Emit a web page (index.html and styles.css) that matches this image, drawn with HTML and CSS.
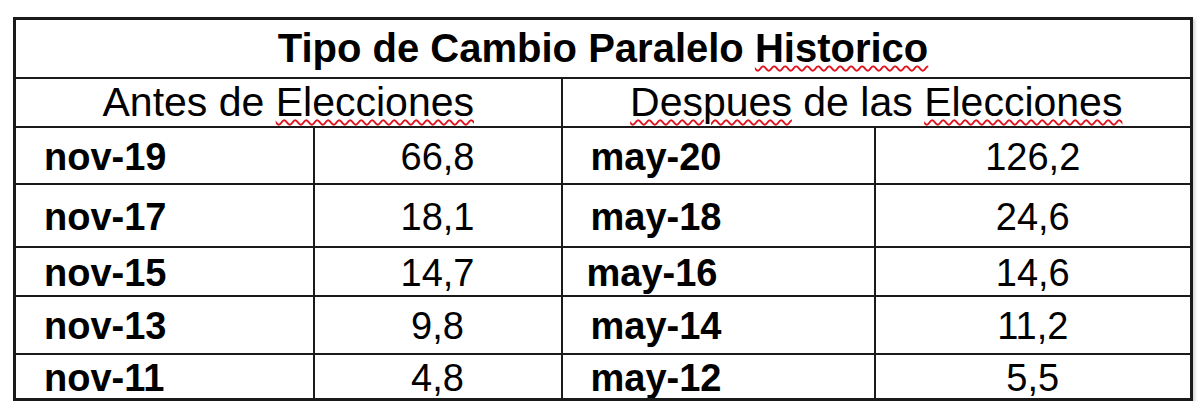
FILE: index.html
```html
<!DOCTYPE html>
<html lang="es">
<head>
<meta charset="utf-8">
<title>Tipo de Cambio Paralelo Historico</title>
<link rel="stylesheet" href="styles.css">
</head>
<body>
<table class="fx">
  <colgroup>
    <col class="c1"><col class="c2"><col class="c3"><col class="c4">
  </colgroup>
  <tr class="r-title">
    <th colspan="4" class="title">Tipo de Cambio Paralelo <span class="spell">Historico</span></th>
  </tr>
  <tr class="r-head">
    <th colspan="2" class="head">Antes de <span class="spell">Elecciones</span></th>
    <th colspan="2" class="head"><span class="spell">Despues</span> de las <span class="spell">Elecciones</span></th>
  </tr>
  <tr class="r1">
    <td class="lbl">nov-19</td><td class="val">66,8</td>
    <td class="lbl">may-20</td><td class="val">126,2</td>
  </tr>
  <tr class="r2">
    <td class="lbl">nov-17</td><td class="val">18,1</td>
    <td class="lbl">may-18</td><td class="val">24,6</td>
  </tr>
  <tr class="r3">
    <td class="lbl">nov-15</td><td class="val">14,7</td>
    <td class="lbl lbl-tight">may-16</td><td class="val">14,6</td>
  </tr>
  <tr class="r4">
    <td class="lbl">nov-13</td><td class="val">9,8</td>
    <td class="lbl">may-14</td><td class="val">11,2</td>
  </tr>
  <tr class="r5">
    <td class="lbl">nov-11</td><td class="val">4,8</td>
    <td class="lbl">may-12</td><td class="val">5,5</td>
  </tr>
</table>
</body>
</html>
```

FILE: styles.css
```css
html, body {
  margin: 0;
  padding: 0;
  background: #ffffff;
}

body {
  padding: 17px 0 0 13px;
  font-family: "Liberation Sans", Arial, sans-serif;
  color: #000;
}

.fx {
  border-collapse: collapse;
  table-layout: fixed;
  width: 1177px;
  border: 3px solid #1a1a1a;
  box-shadow: 2px 2px 3px rgba(0, 0, 0, 0.18);
}

.c1 { width: 299px; }
.c2 { width: 248px; }
.c3 { width: 313px; }
.c4 { width: 317px; }

.fx th,
.fx td {
  border: 2px solid #1a1a1a;
  padding: 0;
  vertical-align: middle;
  line-height: 38px;
  white-space: nowrap;
  overflow: hidden;
}

.r-title { height: 59px; }
.r-head  { height: 49px; }
.r1 { height: 57px; }
.r2 { height: 63px; }
.r3 { height: 49px; }
.r4 { height: 58px; }
.r5 { height: 46px; }

.title {
  font-size: 40px;
  font-weight: bold;
  text-align: center;
  padding-top: 4px;
}

.head {
  font-size: 41px;
  font-weight: normal;
  text-align: center;
  padding-top: 3px;
}

.spell {
  text-decoration: underline wavy #e0141e;
  text-decoration-thickness: 1.5px;
  text-underline-offset: 3px;
}

.lbl {
  font-size: 38px;
  font-weight: bold;
  text-align: left;
  padding: 3px 0 0 28px !important;
}

.lbl-tight {
  padding-left: 24px !important;
}

.val {
  font-size: 38px;
  font-weight: normal;
  text-align: center;
  padding-top: 3px !important;
}
```
